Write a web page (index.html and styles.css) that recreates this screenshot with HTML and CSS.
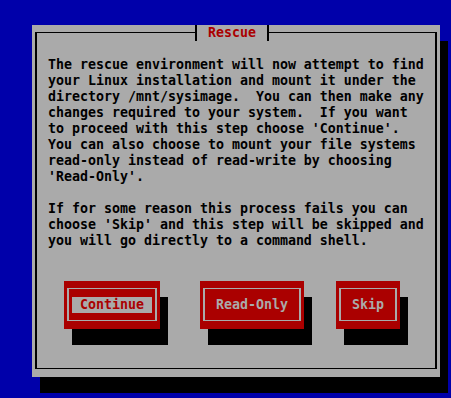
FILE: index.html
```
<!DOCTYPE html>
<html lang="en">
<head>
    <meta charset="UTF-8">
    <meta name="viewport" content="width=device-width, initial-scale=1.0">
    <title>Rescue</title>
    <link rel="stylesheet" href="styles.css">
</head>
<body>

    <div class="screen">
        <!-- Rescue dialog -->
        <div class="dialog">
            <div class="frame">
                <div class="title">Rescue</div>
<pre class="message">The rescue environment will now attempt to find
your Linux installation and mount it under the
directory /mnt/sysimage.  You can then make any
changes required to your system.  If you want
to proceed with this step choose 'Continue'.
You can also choose to mount your file systems
read-only instead of read-write by choosing
'Read-Only'.

If for some reason this process fails you can
choose 'Skip' and this step will be skipped and
you will go directly to a command shell.</pre>
                <div class="buttons">
                    <div class="btn focused"><div class="btn-frame"><span class="btn-label">Continue</span></div></div>
                    <div class="btn btn-readonly"><div class="btn-frame"><span class="btn-label">Read-Only</span></div></div>
                    <div class="btn btn-skip"><div class="btn-frame"><span class="btn-label">Skip</span></div></div>
                </div>
            </div>
        </div>
    </div>

</body>
</html>
```

FILE: styles.css
```
body {
    margin: 0;
    background: #0000aa;
    font-family: "DejaVu Sans Mono", "Liberation Mono", monospace;
    font-size: 13.29px;
    font-weight: bold;
    line-height: 16px;
}

.screen {
    width: 451px;
    height: 398px;
    overflow: hidden;
    padding: 25px 0 0 32px;
    box-sizing: border-box;
}

/* Dialog window */
.dialog {
    width: 408px;
    height: 352px;
    background: #aaaaaa;
    box-shadow: 8px 16px 0 #000;
    padding: 7px 3px 8px 3px;
    box-sizing: border-box;
}

.frame {
    position: relative;
    height: 100%;
    border: solid #000;
    border-width: 1px 2px;
    box-sizing: border-box;
    padding-top: 24px;
}

.title {
    position: absolute;
    top: -8px;
    left: 158px;
    width: 74px;
    height: 16px;
    box-sizing: border-box;
    border-left: 2px solid #000;
    border-right: 2px solid #000;
    background: #aaaaaa;
    color: #aa0000;
    text-align: center;
}

.message {
    margin: 0;
    padding-left: 11px;
    font: inherit;
    color: #000;
}

/* Buttons */
.buttons {
    display: flex;
    margin-top: 32px;
    padding-left: 27px;
}

.btn {
    height: 48px;
    background: #aa0000;
    box-shadow: 8px 16px 0 #000;
    padding: 7px 3px 8px;
    box-sizing: border-box;
}

    .btn-readonly {
        margin-left: 40px;
    }

    .btn-skip {
        margin-left: 32px;
    }

.btn-frame {
    height: 100%;
    border: solid #aaaaaa;
    border-width: 1px 2px;
    box-sizing: border-box;
    padding: 8px 3px 0;
}

.btn-label {
    display: block;
    padding: 0 8px;
    color: #aaaaaa;
}

    .focused .btn-label {
        background: #aaaaaa;
        color: #aa0000;
    }
```
